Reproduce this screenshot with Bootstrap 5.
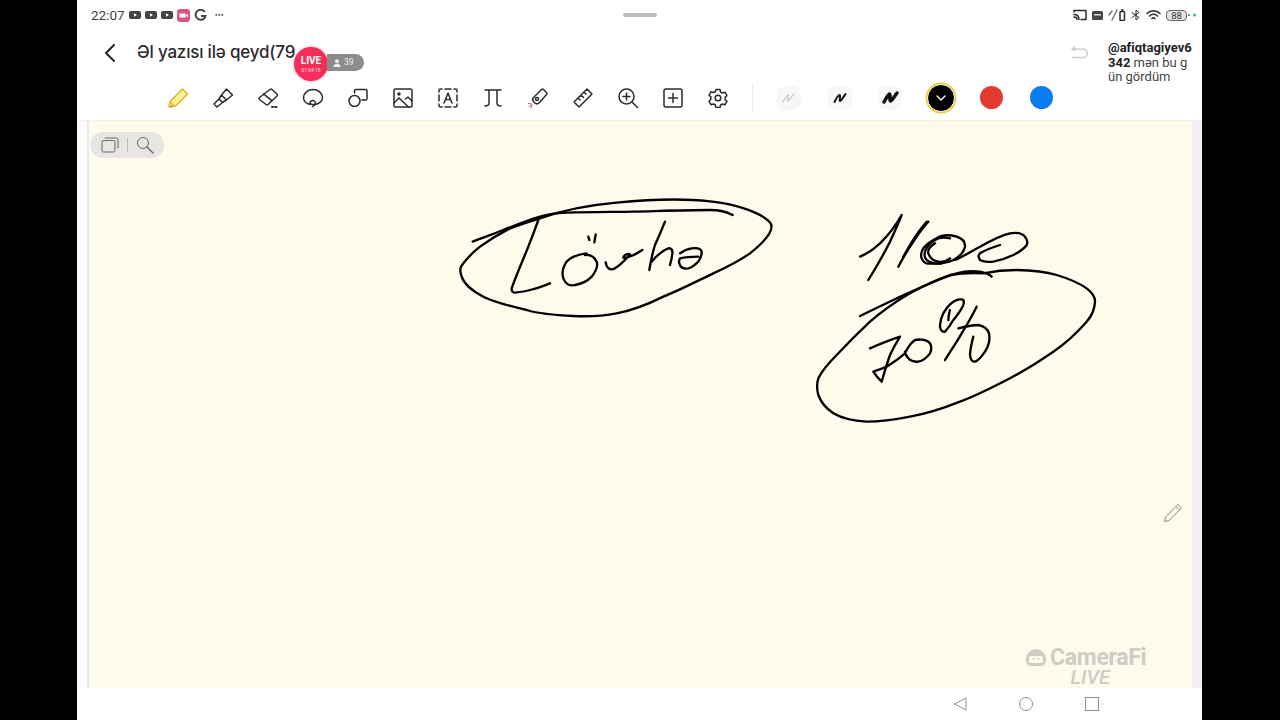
<!DOCTYPE html>
<html lang="az">
<head>
  <meta charset="UTF-8">
  <meta name="viewport" content="width=device-width, initial-scale=1.0">
  <title>Əl yazısı ilə qeyd</title>
  <link href="https://cdn.jsdelivr.net/npm/bootstrap@5.3.3/dist/css/bootstrap.min.css" rel="stylesheet">
  <style>
    html, body { height: 720px; overflow: hidden; background: #000; }
    body { font-family: "Noto Sans", "Liberation Sans", sans-serif; }
    .screen { width: 1125px; height: 720px; margin-left: 77px; background: #fff; position: relative; overflow: hidden; }
    .ic { fill: none; stroke: #2b2b2b; stroke-width: 1.5; stroke-linecap: round; stroke-linejoin: round; }

    .status-row { height: 30px; display: grid; grid-template-columns: 1fr auto 1fr; align-items: center; color: #444; font-size: 12px; }
    .status-left { padding-left: 14px; }
    .status-right { padding-right: 5px; gap: 5px; }
    .handle { width: 34px; height: 4px; border-radius: 2px; background: #bdbdbd; }
    .clock { font-family: "Roboto", sans-serif; font-size: 13.5px; color: #3d3d3d; }
    .dots { font-size: 8px; line-height: 1; color: #666; }

    .title-row { height: 45px; padding-left: 27px; }
    .page-title { width: 160px; margin-left: 21px; overflow: hidden; white-space: nowrap; font-family: "Inter", sans-serif; font-size: 17px; font-weight: 500; color: #2a2a2a; letter-spacing: -.2px; }
    .undo-btn { margin-right: 114px; }

    .tool-row { height: 45px; padding-left: 78px; }
    .tool-slot { width: 45px; height: 45px; }
    .tool-sep { width: 1px; height: 28px; background: #ececec; margin: 0 3px 0 12px; }
    .pen-slot { width: 50.5px; height: 45px; }
    .pen-bg { width: 24px; height: 24px; border-radius: 8px; background: #f7f7f7; }
    .swatch { width: 23px; height: 23px; border-radius: 50%; }
    .swatch-black { width: 28px; height: 28px; background: #000; box-shadow: 0 0 0 1.5px #e9cf3c; border: 1px solid #fff; }
    .swatch-red { background: #e53a30; }
    .swatch-blue { background: #0b7cf0; }

    .paper-wrap { height: 568px; border-top: 1px solid #f4f1e6; border-right: 10px solid #f0f0f6; background: #fcfcfd; padding-left: 12px; }
    .paper { height: 100%; background: #fefaec; position: relative; box-shadow: -2px 0 0 #e8e8ef; }
    .sketch { position: absolute; left: -89px; top: -121px; width: 1280px; height: 720px; }
    .sketch path { fill: none; stroke: #000; stroke-width: 7; stroke-linecap: round; stroke-linejoin: round; }

    .nav-row { height: 32px; padding-right: 103px; gap: 52px; }

    .live-badge { position: absolute; left: 217px; top: 47px; width: 34px; height: 34px; border-radius: 50%; background: #f32e58; color: #fff; text-align: center; font-family: "Roboto", sans-serif; font-weight: 700; font-size: 10px; line-height: 1; padding-top: 9px; box-shadow: 0 0 3px rgba(243,46,88,.5); }
    .live-badge span { display: block; font-size: 5px; font-weight: 400; margin-top: 2px; opacity: .8; }
    .viewers { position: absolute; left: 250px; top: 54px; width: 37px; height: 17px; border-radius: 0 9px 9px 0; background: #8c8c8c; color: #eee; font-family: "Roboto", sans-serif; font-size: 8.5px; gap: 3px; padding-left: 6px; }
    .comment-box { position: absolute; left: 1031px; top: 41px; width: 90px; font-family: "Roboto", sans-serif; font-size: 13px; line-height: 14.5px; color: #444; }
    .comment-box b { color: #222; font-weight: 700; }
    .float-pill { position: absolute; left: 1px; top: 11px; width: 74px; height: 26px; border-radius: 13px; background: #e7e6e3; }
    .pill-bar { width: 1px; height: 14px; background: #bbb; margin: 0 8px 0 8px; }
    .pen-hint { position: absolute; left: 1074px; top: 382px; }
    .watermark { position: absolute; left: 937px; top: 526px; width: 121px; color: #cfccc4; font-family: "Roboto", sans-serif; font-weight: 700; }
    .wm-top { font-size: 23px; line-height: 21px; letter-spacing: -.3px; white-space: nowrap; }
    .wm-live { font-size: 20px; line-height: 18px; font-style: italic; font-weight: 500; text-align: right; padding-right: 37px; }
  </style>
</head>
<body>

  <div class="screen d-flex flex-column">
    <!-- status bar -->
    <div class="status-row">
      <div class="status-left d-flex align-items-center gap-1">
        <span class="clock">22:07</span>
        <svg width="12" height="10" viewBox="0 0 12 10"><rect y="1" width="12" height="8" rx="2" fill="#444"/><path d="M5 3.2v3.6L8 5z" fill="#fff"/></svg>
        <svg width="12" height="10" viewBox="0 0 12 10"><rect y="1" width="12" height="8" rx="2" fill="#444"/><path d="M5 3.2v3.6L8 5z" fill="#fff"/></svg>
        <svg width="12" height="10" viewBox="0 0 12 10"><rect y="1" width="12" height="8" rx="2" fill="#444"/><path d="M5 3.2v3.6L8 5z" fill="#fff"/></svg>
        <svg width="13" height="13" viewBox="0 0 13 13"><rect width="13" height="13" rx="3" fill="#d9577f"/><rect x="2.5" y="4.5" width="6" height="4" fill="#fff"/><path d="M9 6l2-1.3v3.6L9 7z" fill="#fff"/></svg>
        <svg width="13" height="13" viewBox="0 0 13 13"><path d="M10.8 3A5 5 0 1 0 11.5 7H7" fill="none" stroke="#444" stroke-width="2"/></svg>
        <span class="dots ms-1">•••</span>
      </div>
      <div class="handle"></div>
      <div class="status-right d-flex align-items-center justify-content-end">
        <svg width="14" height="12" viewBox="0 0 14 12" class="ic"><path d="M1 3V1.5h12v9H8M1 5.500c3 0 5 2 5 5M1 8c1.500 0 3 1 3 2.500"/></svg>
        <svg width="11" height="9" viewBox="0 0 11 9"><rect width="11" height="9" rx="1.500" fill="#444"/><rect x="2" y="3" width="7" height="1.500" fill="#ddd"/></svg>
        <svg width="18" height="12" viewBox="0 0 18 12" class="ic"><path d="M1 6l3-4M4 11l5-10" stroke="#777"/><rect x="12" y="2.500" width="4.500" height="9" rx="1"/><path d="M13.500 1h1.500"/></svg>
        <svg width="10" height="12" viewBox="0 0 10 12" class="ic"><path d="M1 3.500l7 5L5 11V1l3 2.500-7 5" stroke-width="1"/></svg>
        <svg width="15" height="12" viewBox="0 0 15 12" class="ic"><path d="M1 4.500a9 9 0 0 1 13 0M3.500 7a5.500 5.500 0 0 1 8 0M6 9.500a2 2 0 0 1 3 0"/></svg>
        <div class="d-flex align-items-center">
          <svg width="21" height="11" viewBox="0 0 21 11"><rect x=".5" y=".5" width="20" height="10" rx="3.500" fill="#e4e4e4" stroke="#666"/><text x="10.500" y="8.500" text-anchor="middle" font-family="Roboto, sans-serif" font-size="9.500" fill="#333">88</text></svg>
          <svg width="10" height="6" viewBox="0 0 10 6"><circle cx="2" cy="3" r="1" fill="#666"/><circle cx="7.500" cy="3" r="1.500" fill="#35b58f"/></svg>
        </div>
      </div>
    </div>

    <!-- title row -->
    <div class="title-row d-flex align-items-center">
      <svg width="12" height="20" viewBox="0 0 12 20" class="ic"><path d="M10 2L2 10l8 8" stroke-width="2" stroke="#222"/></svg>
      <div class="page-title">Əl yazısı ilə qeyd(79</div>
      <svg class="ms-auto undo-btn" width="17" height="13" viewBox="0 0 17 13" fill="none" stroke="#cdcdcd" stroke-width="1.500" stroke-linecap="round" stroke-linejoin="round"><path d="M3.500 1L1 3l2.500 1.500M1 3h11a4 4 0 0 1 0 8.500H1.500"/></svg>
    </div>

    <!-- tools -->
    <div class="tool-row d-flex align-items-center">
      <div class="tool-slot d-flex align-items-center justify-content-center">
        <svg width="22" height="22" viewBox="0 0 22 22"><path d="M15.500 2l5 5L9 18.500 3.500 20l-1.500-.500 1-5z" fill="#fdf09b" stroke="#e3ab1c" stroke-width="1.300" stroke-linejoin="round"/><path d="M3.500 15.500l3.500 3.500" stroke="#e3ab1c" stroke-width="1.300"/><path d="M2 20.500l2.500-2 .8.800z" fill="#7a6a10"/></svg>
      </div>
      <div class="tool-slot d-flex align-items-center justify-content-center">
        <svg width="22" height="22" viewBox="0 0 22 22" class="ic"><path d="M14.500 2l6 6-6 5-5-5zM9.500 8l-2.500 4 3.500 3.500 4-2.500M7 12l-5 5 3 3 5.500-4.500"/></svg>
      </div>
      <div class="tool-slot d-flex align-items-center justify-content-center">
        <svg width="22" height="22" viewBox="0 0 22 22" class="ic"><path d="M13 2.500a1.500 1.500 0 0 1 2 0l5 4.500a1.500 1.500 0 0 1 0 2L11 17.500a1.500 1.500 0 0 1-2 0l-6.500-5a1.500 1.500 0 0 1 0-2zM6.500 6.800l8 6.500"/><path d="M15 20h1M18 20h1.500" stroke-width="1.800"/></svg>
      </div>
      <div class="tool-slot d-flex align-items-center justify-content-center">
        <svg width="22" height="22" viewBox="0 0 22 22" class="ic"><path d="M8 17.500C4 16.500 1.500 14 1.500 10.500 1.500 6 6 2.500 11 2.500s9.500 3.500 9.500 8-4.500 7-8.500 7c-2 0-4-.5-4-2s3-2.500 4.500-1.500 1 5-2 5.500"/></svg>
      </div>
      <div class="tool-slot d-flex align-items-center justify-content-center">
        <svg width="22" height="22" viewBox="0 0 22 22" class="ic"><path d="M7.500 6V4a1.500 1.500 0 0 1 1.500-1.500h9.500A1.500 1.500 0 0 1 20 4v7.500a1.500 1.500 0 0 1-1.500 1.500H15"/><circle cx="7.500" cy="14" r="5.500"/></svg>
      </div>
      <div class="tool-slot d-flex align-items-center justify-content-center">
        <svg width="20" height="20" viewBox="0 0 20 20" class="ic"><rect x="1" y="1" width="18" height="18" rx="1.500"/><circle cx="6" cy="6" r="1" fill="#2b2b2b"/><path d="M1 15l5-5 9.500 9M12.500 11l2.500-2 4 4"/></svg>
      </div>
      <div class="tool-slot d-flex align-items-center justify-content-center">
        <svg width="20" height="20" viewBox="0 0 20 20" class="ic"><path d="M4 1H2.500A1.500 1.500 0 0 0 1 2.500V4M16 1h1.500A1.500 1.500 0 0 1 19 2.500V4M4 19H2.500A1.500 1.500 0 0 1 1 17.500V16M16 19h1.500a1.500 1.500 0 0 0 1.500-1.500V16M7 1h6M7 19h6M1 7v6M19 7v6M6 15l4-10 4 10M7.500 11.500h5"/></svg>
      </div>
      <div class="tool-slot d-flex align-items-center justify-content-center">
        <svg width="20" height="20" viewBox="0 0 20 20" class="ic"><path d="M2 2h16M6 2v13c0 2-1 3-4 3M14 2v13c0 2 1 3 4 3"/></svg>
      </div>
      <div class="tool-slot d-flex align-items-center justify-content-center">
        <svg width="22" height="22" viewBox="0 0 22 22" class="ic" stroke-width="1.300"><path d="M14.500 2.500a1.500 1.500 0 0 1 2 0l3 3a1.500 1.500 0 0 1 0 2L12 16a3 3 0 0 1-4 0l-1.500-1.500a3 3 0 0 1 0-4z"/><circle cx="10" cy="12" r="1.500"/><path d="M1.500 16.500l3 .5M5 18l-1 3M2 20l2-2" stroke="#c85a6a" stroke-width="1"/></svg>
      </div>
      <div class="tool-slot d-flex align-items-center justify-content-center">
        <svg width="22" height="22" viewBox="0 0 22 22" class="ic"><path d="M15 2l5 5L7 20l-5-5zM6 11l2 2M9 8l2.500 2.500M12 5l2 2"/></svg>
      </div>
      <div class="tool-slot d-flex align-items-center justify-content-center">
        <svg width="22" height="22" viewBox="0 0 22 22" class="ic"><circle cx="9.500" cy="9.500" r="7.500"/><path d="M15 15l5.500 5.500M6 9.500h7M9.500 6v7"/></svg>
      </div>
      <div class="tool-slot d-flex align-items-center justify-content-center">
        <svg width="20" height="20" viewBox="0 0 20 20" class="ic"><rect x="1" y="1" width="18" height="18" rx="2"/><path d="M5.500 10h9M10 5.500v9"/></svg>
      </div>
      <div class="tool-slot d-flex align-items-center justify-content-center">
        <svg width="20" height="20" viewBox="0 0 20 20" class="ic"><path d="M8 1.500h4l.6 2.500 1.900 1 2.400-.8 2 3.500-1.800 1.700v2.200l1.800 1.700-2 3.500-2.400-.8-1.900 1-.6 2.500H8l-.6-2.500-1.900-1-2.400.8-2-3.500L2.900 11.100V8.900L1.100 7.200l2-3.500 2.400.8 1.900-1z"/><circle cx="10" cy="10" r="2.800"/></svg>
      </div>
      <div class="tool-sep"></div>
      <div class="pen-slot d-flex align-items-center justify-content-center ms-2">
        <div class="pen-bg d-flex align-items-center justify-content-center">
          <svg width="14" height="12" viewBox="0 0 14 12" fill="none" stroke="#9a9a9a" stroke-width=".8" stroke-linecap="round"><path d="M1 10C3 7 5 3 6 3S5 9 6 9s4-5 6-7"/></svg>
        </div>
      </div>
      <div class="pen-slot d-flex align-items-center justify-content-center">
        <div class="pen-bg d-flex align-items-center justify-content-center">
          <svg width="14" height="12" viewBox="0 0 14 12" fill="none" stroke="#111" stroke-width="2" stroke-linecap="round" stroke-linejoin="round"><path d="M1.500 10C3 7 5 3 6.500 3S6 9 7 9s3.500-4 5.500-7"/></svg>
        </div>
      </div>
      <div class="pen-slot d-flex align-items-center justify-content-center">
        <div class="pen-bg d-flex align-items-center justify-content-center">
          <svg width="17" height="13" viewBox="0 0 17 13" fill="none" stroke="#111" stroke-width="3.400" stroke-linecap="round" stroke-linejoin="round"><path d="M2 11C4 8 6 3 7.500 3S7 10 8.500 10s4-5 6.500-8"/></svg>
        </div>
      </div>
      <div class="pen-slot d-flex align-items-center justify-content-center">
        <div class="swatch swatch-black d-flex align-items-center justify-content-center">
          <svg width="12" height="8" viewBox="0 0 12 8" fill="none" stroke="#fff" stroke-width="1.300" stroke-linecap="round" stroke-linejoin="round"><path d="M2 2l4 4 4-4"/></svg>
        </div>
      </div>
      <div class="pen-slot d-flex align-items-center justify-content-center"><div class="swatch swatch-red"></div></div>
      <div class="pen-slot d-flex align-items-center justify-content-center"><div class="swatch swatch-blue"></div></div>
    </div>

    <!-- writing surface -->
    <div class="paper-wrap">
      <div class="paper">
        <svg class="sketch" viewBox="0 0 1280 720">
          <!-- handwriting, traced at 3x -->
          <g transform="translate(450 190) scale(.33333)">
            <path d="M270 85C340 60 420 45 500 38C600 28 690 24 780 34C860 42 940 70 962 100C972 118 950 150 900 190C860 218 830 232 790 250C740 274 690 300 640 320C590 345 545 362 500 370C460 378 415 380 370 378C320 376 270 372 230 360C180 348 135 338 100 320C65 302 42 282 35 260C28 240 30 232 40 220C55 200 70 186 90 170C120 148 150 130 180 115C210 104 240 94 270 85"/>
            <path d="M68 155C100 142 130 132 160 120C195 106 235 90 270 80C295 72 320 69 350 68C420 66 490 66 550 65C630 63 710 60 780 60C810 60 832 66 848 75"/>
            <path d="M265 90C255 118 246 142 235 170C218 212 200 252 185 295C184 305 190 308 195 308C212 306 226 304 240 300C262 294 282 288 300 280"/>
          </g>
          <g transform="translate(555 225) scale(.33333)">
            <path d="M95 85C70 88 48 96 35 110C24 126 20 145 25 160C32 178 46 184 60 180C82 176 98 168 110 155C122 140 130 124 125 110C118 96 106 88 90 90"/>
            <path d="M100 35L103 45M122 28L118 52"/>
            <path d="M152 112C155 130 165 138 180 130C200 118 215 100 225 88C220 84 205 90 205 98C215 100 240 90 262 75"/>
            <path d="M330 -10C320 15 310 38 300 60C292 85 287 110 283 135"/>
            <path d="M290 110C298 100 306 92 315 85C325 78 338 68 345 70C352 72 353 78 352 85C351 98 348 110 345 120"/>
            <path d="M375 85C386 76 398 72 410 70C424 68 438 70 440 80C440 92 436 102 430 110C420 120 410 128 400 130C388 132 378 128 375 120C371 112 371 106 375 100C392 96 412 95 430 95"/>
          </g>
          <g transform="translate(810 205) scale(.33333)">
            <path d="M150 155C172 146 192 132 210 115C236 90 258 60 275 30C264 58 252 84 240 110C220 150 198 188 175 225"/>
            <path d="M355 50C338 68 324 88 310 110C294 134 278 160 265 185"/>
            <path d="M350 50C330 72 300 118 280 155"/>
            <path d="M440 95C415 88 395 90 380 100C362 108 350 118 340 130C332 142 332 152 335 160C340 172 350 178 360 175C385 178 410 174 430 165C450 154 462 140 465 125C466 110 456 100 440 95"/>
            <path d="M375 115C360 125 352 136 355 145C360 160 372 168 385 170C398 172 410 168 420 160"/>
            <path d="M420 100C400 96 386 98 375 105C360 114 350 126 345 140C342 152 344 160 350 165C362 174 380 177 395 175"/>
            <path d="M435 165C460 155 485 138 510 125C540 108 570 92 600 85C620 82 638 86 645 95C652 104 654 112 650 120C640 134 626 142 610 150C590 160 570 166 550 170C532 172 518 170 510 165C504 156 504 150 510 145C528 134 550 126 570 120"/>
            <path d="M520 205C555 198 590 195 620 195C660 196 705 200 740 210C780 222 810 236 830 250C848 264 856 276 855 290C854 312 846 332 830 350C802 382 768 414 730 440C690 468 645 496 600 520C550 546 500 572 450 590C400 610 350 626 300 635C255 644 210 650 170 650C130 648 95 640 70 625C48 610 32 590 25 570C20 552 20 536 25 520C38 494 58 472 80 450C112 416 146 382 180 350C220 316 260 288 300 265C340 242 380 224 420 210C455 204 490 203 520 205"/>
            <path d="M150 333C185 316 218 300 250 285C285 268 318 254 350 240C380 226 410 214 440 205C465 198 490 197 510 200C526 203 538 208 545 215"/>
          </g>
          <g transform="translate(865 290) scale(.33333)">
            <path d="M15 175C45 162 75 150 105 140C94 158 84 176 75 195C66 220 58 248 50 275C40 266 32 256 25 245C38 240 52 236 65 230C85 218 104 204 120 190"/>
            <path d="M120 190C128 172 138 158 150 150C168 146 188 150 195 160C200 170 200 180 195 190C186 202 174 212 160 215C148 216 136 212 130 205C124 198 120 192 120 185"/>
            <path d="M225 105C226 92 230 80 235 70C244 54 254 42 265 35C278 28 292 26 295 30C298 38 296 46 290 55C282 68 274 80 265 90C258 102 250 114 240 125C234 126 230 124 228 120C225 114 224 110 225 105"/>
            <path d="M255 60C252 70 250 80 250 90"/>
            <path d="M240 210C256 184 274 158 290 130C306 104 322 76 335 50"/>
            <path d="M280 115C300 110 320 106 340 105C356 108 368 118 372 130C376 150 370 170 360 185C350 200 340 212 330 215C320 216 316 206 315 195C316 176 320 158 325 140"/>
          </g>
        </svg>

        <div class="float-pill d-flex align-items-center justify-content-center">
          <svg width="18" height="16" viewBox="0 0 18 16" class="ic"><rect x="1" y="3.500" width="13" height="11.500" rx="1.500" style="stroke:#666;stroke-width:1"/><path d="M4 1h11.500A1.500 1.500 0 0 1 17 2.500V11" style="stroke:#666;stroke-width:1"/></svg>
          <div class="pill-bar"></div>
          <svg width="18" height="18" viewBox="0 0 18 18" class="ic"><circle cx="7" cy="7" r="5.500" style="stroke:#666;stroke-width:1"/><path d="M11 11l6 6" style="stroke:#666;stroke-width:1.300"/></svg>
        </div>

        <svg class="pen-hint" width="20" height="20" viewBox="0 0 20 20" fill="none" stroke="#8a8a84" stroke-width="1" stroke-linejoin="round"><path d="M15 1.500l3.500 3.500L6 17.500 1.500 18.500 2.500 14zM13 3.500l3.500 3.500"/></svg>

        <div class="watermark">
          <div class="wm-top d-flex align-items-center gap-1">
            <svg width="20" height="19" viewBox="0 0 20 19"><path d="M0 11a10 10 0 0 1 20 0v2a5 5 0 0 1-5 5H5a5 5 0 0 1-5-5z" fill="#cfccc4"/><rect x="3" y="8" width="14" height="7" rx="2" fill="#fefaec"/><path d="M6.500 11h2M11.500 11h2" stroke="#cfccc4" stroke-width="1.500"/></svg>
            <span>CameraFi</span>
          </div>
          <div class="wm-live">LIVE</div>
        </div>
      </div>
    </div>

    <!-- nav -->
    <div class="nav-row d-flex align-items-center justify-content-end">
      <svg width="14" height="14" viewBox="0 0 14 14" fill="none" stroke="#8e8e8e" stroke-linejoin="round"><path d="M13 1v12L1.500 7z"/></svg>
      <svg width="14" height="14" viewBox="0 0 14 14" fill="none" stroke="#8e8e8e"><circle cx="7" cy="7" r="6.500"/></svg>
      <svg width="14" height="14" viewBox="0 0 14 14" fill="none" stroke="#8e8e8e"><rect x=".5" y=".5" width="13" height="13"/></svg>
    </div>

    <!-- overlays -->
    <div class="live-badge">LIVE<span>01:04:18</span></div>
    <div class="viewers d-flex align-items-center">
      <svg width="8" height="8" viewBox="0 0 8 8"><circle cx="4" cy="2.200" r="2" fill="#eee"/><path d="M.5 8c0-2.500 1.500-3.200 3.500-3.200S7.500 5.500 7.500 8z" fill="#eee"/></svg>
      <span>39</span>
    </div>
    <div class="comment-box"><b>@afiqtagiyev6</b><br><b>342</b> mən bu g<br>ün gördüm</div>
  </div>

  <script src="https://cdn.jsdelivr.net/npm/bootstrap@5.3.3/dist/js/bootstrap.bundle.min.js"></script>
</body>
</html>
